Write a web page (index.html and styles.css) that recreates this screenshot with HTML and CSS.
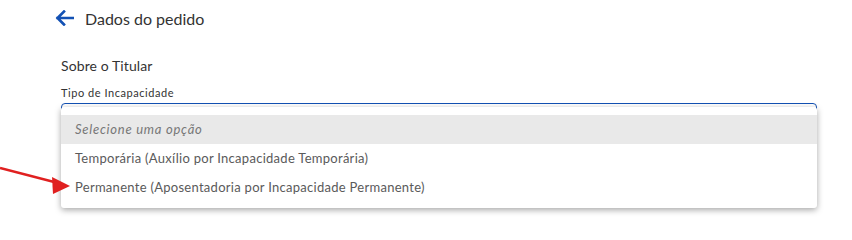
FILE: index.html
```html
<!DOCTYPE html>
<html lang="pt-BR">
<head>
<meta charset="utf-8">
<link rel="stylesheet" href="styles.css">
</head>
<body>
<div class="page">
  <div class="header">
    <svg class="back" width="19" height="16" viewBox="0 0 19 16"><path d="M9 1.5 L2.5 8 L9 14.5 M2.5 8 H18" fill="none" stroke="#1351b4" stroke-width="2.6" stroke-linecap="square" stroke-linejoin="miter"/></svg>
    <span class="title">Dados do pedido</span>
  </div>
  <div class="section">
    <div class="section-title">Sobre o Titular</div>
    <div class="field">
      <label class="label">Tipo de Incapacidade</label>
      <div class="input"></div>
      <ul class="menu">
        <li class="opt placeholder">Selecione uma opção</li>
        <li class="opt">Temporária (Auxílio por Incapacidade Temporária)</li>
        <li class="opt">Permanente (Aposentadoria por Incapacidade Permanente)</li>
      </ul>
    </div>
  </div>
  <svg class="pointer" width="74" height="40" viewBox="0 0 74 40"><line x1="0" y1="8" x2="58" y2="23" stroke="#e02020" stroke-width="2.6"/><polygon points="52,17 70,26 53,34" fill="#e02020"/></svg>
</div>
</body>
</html>
```
FILE: styles.css
```css
html, body { margin: 0; padding: 0; background: #fff; }
body { font-family: "Lato", "Open Sans", sans-serif; color: #333; }
.page { position: relative; width: 852px; height: 228px; overflow: hidden; }
.header { display: flex; align-items: center; padding: 9px 0 0 55px; height: 18px; }
.back { display: block; }
.title { margin-left: 11px; font-size: 16px; color: #333; }
.section { padding: 30px 0 0 61px; width: 756px; }
.section-title { font-size: 14px; color: #333; line-height: 18px; letter-spacing: 0.1px; }
.field { position: relative; margin-top: 11px; }
.label { display: block; font-size: 11px; line-height: 14px; color: #333; letter-spacing: 0.55px; }
.input { margin-top: 3px; height: 32px; border: 1px solid #1351b4; border-radius: 4px; box-sizing: border-box; }
.menu { position: absolute; left: 0; right: 0; top: 21px; margin: 0; padding: 8px 0 6px; list-style: none; background: #fff; border-radius: 3px; box-shadow: 0 2px 6px rgba(0,0,0,0.35); }
.opt { height: 29px; line-height: 29px; padding-left: 14px; font-size: 13px; color: #5a5a5a; letter-spacing: 0.28px; }
.placeholder { background: #e9e9e9; font-style: italic; color: #777; letter-spacing: 0.75px; }
.pointer { position: absolute; left: 0; top: 160px; }
```
